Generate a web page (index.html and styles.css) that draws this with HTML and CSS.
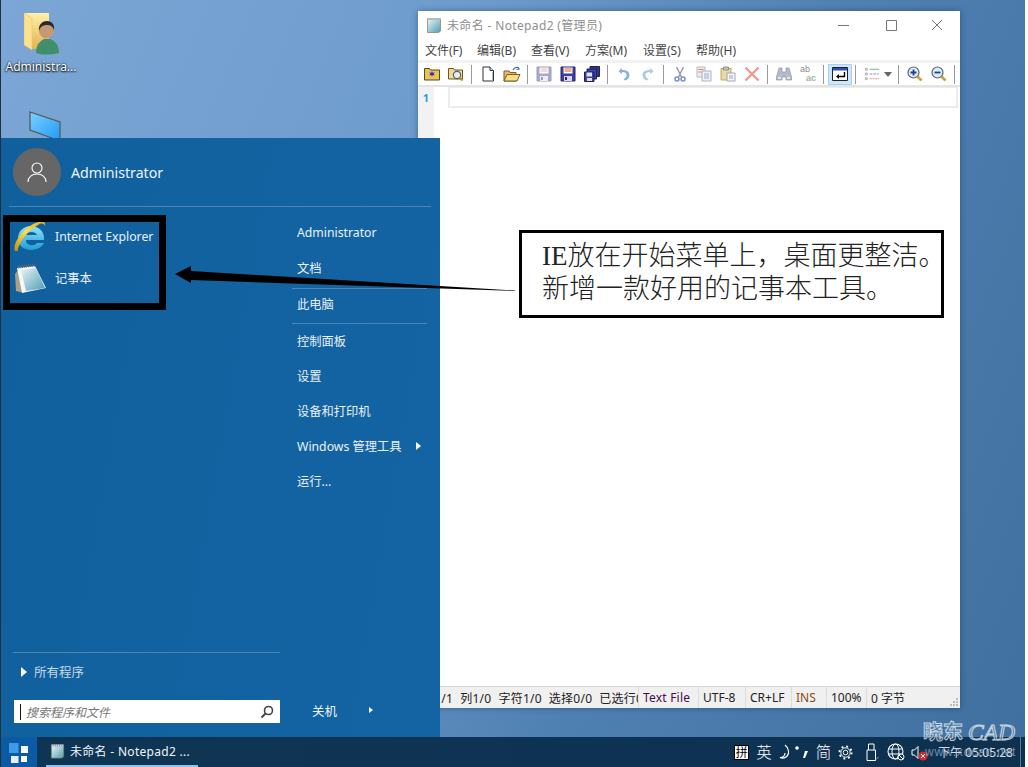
FILE: index.html
```html
<!DOCTYPE html>
<html lang="zh">
<head>
<meta charset="utf-8">
<title>Desktop</title>
<link rel="stylesheet" href="styles.css">
</head>
<body>
<svg class="defs" width="0" height="0" aria-hidden="true">
  <defs>
    <linearGradient id="pad" x1="0" y1="0" x2="1" y2="1"><stop offset="0" stop-color="#e8f4f6"/><stop offset="1" stop-color="#4f9db4"/></linearGradient>
    <linearGradient id="fold" x1="0" y1="0" x2="0" y2="1"><stop offset="0" stop-color="#fff0a8"/><stop offset="1" stop-color="#e3b34f"/></linearGradient>
    <linearGradient id="screen" x1="0" y1="0" x2="1" y2="1"><stop offset="0" stop-color="#7cd0ff"/><stop offset="1" stop-color="#1d9bf5"/></linearGradient>
    <linearGradient id="ie" x1="0" y1="0" x2="0" y2="1"><stop offset="0" stop-color="#8fe4fa"/><stop offset="1" stop-color="#1f9cd8"/></linearGradient>
    <linearGradient id="ring" x1="0" y1="1" x2="1" y2="0"><stop offset="0" stop-color="#c98a10"/><stop offset=".5" stop-color="#ffe04a"/><stop offset="1" stop-color="#e8a820"/></linearGradient>
    <symbol id="i-pad" viewBox="0 0 16 16">
      <path d="M1.500 2.500h13v11.500l-2 1.500h-11z" fill="url(#pad)" stroke="#8a8a6a" stroke-width=".8"/>
      <path d="M1.500 1h13v2h-13z" fill="#dfe8ea"/>
      <path d="M2 1v2M4 1v2M6 1v2M8 1v2M10 1v2M12 1v2M14 1v2" stroke="#667" stroke-width=".7"/>
    </symbol>
    <symbol id="i-folder-star" viewBox="0 0 16 16">
      <path d="M.5 2.500h5l1 1.500h9v10h-15z" fill="#e8c25a" stroke="#5a4a16"/>
      <path d="M8 5l.7 1.900L10.800 6l-1.200 1.800 1.200 1.800-2.100-.8L8 11l-.7-2.200-2.100.8 1.200-1.800L5.200 6l2.100.9z" fill="#2222c0"/>
    </symbol>
    <symbol id="i-folder-find" viewBox="0 0 16 16">
      <path d="M.5 2.500h5l1 1.500h8v9h-14z" fill="#f3d898" stroke="#6b5a1e"/>
      <circle cx="9" cy="9" r="3.600" fill="#dfeefa" stroke="#55606e" stroke-width="1.200"/>
      <path d="M11.500 11.500l3 3" stroke="#c98a10" stroke-width="2"/>
    </symbol>
    <symbol id="i-doc" viewBox="0 0 16 16">
      <path d="M3 1h7l3.500 3.500V15H3z" fill="#fff" stroke="#333"/>
      <path d="M10 1v3.500h3.500" fill="#dde6f0" stroke="#333"/>
      <path d="M12.500 6v8.500" stroke="#a8c0d8"/>
    </symbol>
    <symbol id="i-open" viewBox="0 0 18 16">
      <path d="M1 5h5l1 1.500h6V15H1z" fill="#e2bb62" stroke="#7a5f20"/>
      <path d="M4 8.500h13L14 15H1z" fill="#f7dc8e" stroke="#7a5f20"/>
      <path d="M10 4c1-2 3-3 5-2.500M15 1l1 2-2.500.5" fill="none" stroke="#3a72b4" stroke-width="1.200"/>
    </symbol>
    <symbol id="i-save" viewBox="0 0 16 16">
      <path d="M1 1h14v14H1z" fill="#3d3f9c" stroke="#26276e"/>
      <path d="M3.500 1.500h9v6h-9z" fill="#fff"/>
      <path d="M4.500 3h7M4.500 5h7" stroke="#e0602a"/>
      <path d="M4 10h8v5H4z" fill="#d8d8e4"/>
      <path d="M5 11h2v3H5z" fill="#26276e"/>
    </symbol>
    <symbol id="i-saveall" viewBox="0 0 16 16">
      <path d="M6 .5h9.500v10H6z" fill="#34358a" stroke="#1d1e5c"/>
      <path d="M3 3h9.500v10H3z" fill="#4042a4" stroke="#1d1e5c"/>
      <path d="M.5 6h9.500v9.500H.5z" fill="#3d3f9c" stroke="#1d1e5c"/>
      <path d="M2.500 6.500h5.500v4H2.500z" fill="#dbe7f8"/>
      <path d="M3 12h5v3H3z" fill="#dfdfe8"/>
    </symbol>
    <symbol id="i-undo" viewBox="0 0 12 14">
      <path d="M3.500 1L.5 4.500l3.500 2.500V5c3 0 4.500 1 4.500 3s-1.500 3.500-3 4l1.500 1.500c3-.8 4.500-3 4.500-5.500C11.500 5 9 3 4 3z" fill="#8fb0dc"/>
    </symbol>
    <symbol id="i-cut" viewBox="0 0 12 16">
      <path d="M2.500 1L7.500 11M9.500 1L4.500 11" stroke="#9a9ca6" stroke-width="1.500"/>
      <circle cx="3" cy="13" r="2" fill="none" stroke="#7d8fc4" stroke-width="1.500"/>
      <circle cx="9" cy="13" r="2" fill="none" stroke="#7d8fc4" stroke-width="1.500"/>
    </symbol>
    <symbol id="i-copy" viewBox="0 0 16 16">
      <path d="M1 1h8v10H1z" fill="#f4ecea" stroke="#b8b8c4"/>
      <path d="M2.500 3.500h5M2.500 6h5" stroke="#d88a80"/>
      <path d="M6 5h9v10H6z" fill="#eef2f8" stroke="#a8b4c8"/>
      <path d="M8 8h5M8 10h5M8 12h5" stroke="#9cb0cc"/>
    </symbol>
    <symbol id="i-paste" viewBox="0 0 16 16">
      <path d="M1 2.500h10V14H1z" fill="#ecd9a0" stroke="#b8a876"/>
      <path d="M3.500 1h5v3h-5z" fill="#c4c4c4" stroke="#909090"/>
      <path d="M7 7h8v8H7z" fill="#f4f6fa" stroke="#a0a8b8"/>
      <path d="M9 10h4M9 12h4" stroke="#a0a8b8"/>
    </symbol>
    <symbol id="i-del" viewBox="0 0 16 16">
      <path d="M1.500 1.500l13 13M14.500 1.500l-13 13" stroke="#ec9c8c" stroke-width="2.400"/>
    </symbol>
    <symbol id="i-find" viewBox="0 0 16 16">
      <path d="M3 2h3v4h4V2h3l2.500 9v3H10v-3H6v3H.5v-3z" fill="#b4bccc" stroke="#8e96a8" stroke-width=".7"/>
      <path d="M2 11h3v2H2zM11 11h3v2h-3z" fill="#e4e8f0"/>
    </symbol>
    <symbol id="i-wrap" viewBox="0 0 16 14">
      <path d="M.5.500h15v13H.5z" fill="#fff" stroke="#222"/>
      <path d="M1 1h14v2.500H1z" fill="#2a52b0"/>
      <path d="M12.500 5v4.500H6" fill="none" stroke="#000" stroke-width="1.400"/>
      <path d="M7 7L4 9.500 7 12z" fill="#000"/>
    </symbol>
    <symbol id="i-zin" viewBox="0 0 16 16">
      <circle cx="6.500" cy="6.500" r="5.500" fill="#dcecfa" stroke="#5a6270" stroke-width="1.200"/>
      <path d="M3.500 6.500h6M6.500 3.500v6" stroke="#24408c" stroke-width="1.800"/>
      <path d="M10.500 10.500l4 4" stroke="#d0a030" stroke-width="2.600"/>
    </symbol>
    <symbol id="i-zout" viewBox="0 0 16 16">
      <circle cx="6.500" cy="6.500" r="5.500" fill="#dcecfa" stroke="#5a6270" stroke-width="1.200"/>
      <path d="M3.500 6.500h6" stroke="#24408c" stroke-width="1.800"/>
      <path d="M10.500 10.500l4 4" stroke="#d0a030" stroke-width="2.600"/>
    </symbol>
  </defs>
</svg>

<div class="desktop">
  <main class="wall">
    <div class="desk-icon user-folder">
      <svg class="desk-glyph" viewBox="0 0 36 44" aria-hidden="true">
        <path d="M0 2h25v36H8z" fill="url(#fold)"/>
        <path d="M0 2l8 5v32l-8-5z" fill="#fbe08e" stroke="#e0c070" stroke-width=".5"/>
        <path d="M12 42c0-8 4-12 8-14h6c5 2 9 6 9 14-8 2-16 2-23 0z" fill="#3f8f6a"/>
        <circle cx="22.500" cy="20" r="7.500" fill="#c49a74"/>
        <path d="M15 20c-1-7 4-10 8-10s8 3 7 9c-1-3-3-5-7-5s-7 2-8 6z" fill="#2a2a2a"/>
      </svg>
      <span class="desk-label">Administra...</span>
    </div>
    <svg class="monitor" viewBox="0 0 32 32" aria-hidden="true">
      <path d="M1 1l30 10v19L1 19z" fill="url(#screen)" stroke="#555" stroke-width="1.200"/>
    </svg>

    <section class="notepad">
      <header class="np-title">
        <svg class="np-logo" aria-hidden="true"><use href="#i-pad"/></svg>
        <span class="np-caption">未命名 - Notepad2 (管理员)</span>
        <div class="np-controls">
          <svg viewBox="0 0 46 16" aria-hidden="true"><path d="M16 8.500h11" stroke="#777"/></svg>
          <svg viewBox="0 0 46 16" aria-hidden="true"><path d="M18.500 3.500h10v10h-10z" fill="none" stroke="#777"/></svg>
          <svg viewBox="0 0 46 16" aria-hidden="true"><path d="M18 3l10 10M28 3L18 13" stroke="#777"/></svg>
        </div>
      </header>
      <nav class="np-menu">
        <span class="m1">文件(F)</span><span class="m2">编辑(B)</span><span class="m3">查看(V)</span><span class="m4">方案(M)</span><span class="m5">设置(S)</span><span>帮助(H)</span>
      </nav>
      <div class="np-tools">
        <span class="tb"><svg class="ic"><use href="#i-folder-star"/></svg></span>
        <span class="tb"><svg class="ic"><use href="#i-folder-find"/></svg></span>
        <i class="sep"></i>
        <span class="tb"><svg class="ic"><use href="#i-doc"/></svg></span>
        <span class="tb"><svg class="ic wide"><use href="#i-open"/></svg></span>
        <i class="sep"></i>
        <span class="tb"><svg class="ic faint"><use href="#i-save"/></svg></span>
        <span class="tb"><svg class="ic"><use href="#i-save"/></svg></span>
        <span class="tb"><svg class="ic"><use href="#i-saveall"/></svg></span>
        <i class="sep"></i>
        <span class="tb"><svg class="ic narrow"><use href="#i-undo"/></svg></span>
        <span class="tb"><svg class="ic narrow flip faint2"><use href="#i-undo"/></svg></span>
        <i class="sep"></i>
        <span class="tb"><svg class="ic narrow"><use href="#i-cut"/></svg></span>
        <span class="tb"><svg class="ic"><use href="#i-copy"/></svg></span>
        <span class="tb"><svg class="ic"><use href="#i-paste"/></svg></span>
        <span class="tb"><svg class="ic"><use href="#i-del"/></svg></span>
        <i class="sep"></i>
        <span class="tb"><svg class="ic"><use href="#i-find"/></svg></span>
        <span class="tb"><span class="ab"><span>ab</span><b>ac</b></span></span>
        <i class="sep"></i>
        <span class="tb active"><svg class="ic"><use href="#i-wrap"/></svg></span>
        <i class="sep"></i>
        <span class="tb list">
          <svg class="ic" viewBox="0 0 17 14" aria-hidden="true">
            <path d="M1.500 1h2v2h-2zM1.500 6h2v2h-2zM1.500 11h2v2h-2z" fill="#fff" stroke="#999" stroke-width=".8"/>
            <path d="M6 2h10" stroke="#70b070"/><path d="M6 7h10" stroke="#8888cc" stroke-dasharray="3 1"/><path d="M6 12h10" stroke="#cc8888" stroke-dasharray="2 1"/>
          </svg>
          <i class="caret"></i>
        </span>
        <i class="sep"></i>
        <span class="tb"><svg class="ic"><use href="#i-zin"/></svg></span>
        <span class="tb"><svg class="ic"><use href="#i-zout"/></svg></span>
        <i class="sep"></i>
      </div>
      <div class="np-edit">
        <div class="gutter">1</div>
        <div class="np-text"><div class="curline"></div></div>
      </div>
      <footer class="np-status">
        <span class="f f-pos"><span>行1/1</span><span>列1/0</span><span>字符1/0</span><span>选择0/0</span><span>已选行0</span></span>
        <span class="f f-type">Text File</span>
        <span class="f f-enc">UTF-8</span>
        <span class="f f-eol">CR+LF</span>
        <span class="f f-ins">INS</span>
        <span class="f f-zoom">100%</span>
        <span class="f f-size">0 字节</span>
        <svg class="grip" viewBox="0 0 10 10" aria-hidden="true"><path d="M7 1h2v2H7zM4 4h2v2H4zM7 4h2v2H7zM1 7h2v2H1zM4 7h2v2H4zM7 7h2v2H7z" fill="#bdbdbd"/></svg>
      </footer>
    </section>

    <section class="start">
      <div class="st-user">
        <span class="avatar">
          <svg viewBox="0 0 24 24" aria-hidden="true"><circle cx="12" cy="8" r="5" fill="none" stroke="#fff" stroke-width="1.100"/><path d="M3 22c0-5 4-8 9-8s9 3 9 8" fill="none" stroke="#fff" stroke-width="1.100"/></svg>
        </span>
        <span class="st-name">Administrator</span>
      </div>
      <div class="st-body">
        <div class="st-left">
          <div class="pinned">
            <div class="pin">
              <svg class="pin-ic" viewBox="0 0 32 32" aria-hidden="true">
                <path d="M4 18A13 12 0 0 1 30 18v2H12a6 5 0 0 0 11 3h7c-3 5-8 7-13 7C9 30 4 25 4 18zm8-3h11a6 5 0 0 0-11 0z" fill="url(#ie)" fill-rule="evenodd"/>
                <path d="M1 31C-2 24 9 7 24 2c5-2 8 0 7 4-1-3-4-3-7-1C13 11 5 22 3.500 31z" fill="url(#ring)"/>
              </svg>
              <span>Internet Explorer</span>
            </div>
            <div class="pin">
              <svg class="pin-ic" viewBox="0 0 32 32" aria-hidden="true">
                <path d="M1 12l3-4 6 23-8-2z" fill="#a8a088"/>
                <path d="M3 6l18-2 11 22-24 5z" fill="#f4f8f8"/>
                <path d="M7 8l15-2 9 20-19 3z" fill="url(#pad)"/>
                <path d="M4 5l17-2" stroke="#666" stroke-width="3" stroke-dasharray="1 1"/>
              </svg>
              <span>记事本</span>
            </div>
          </div>
          <div class="st-spacer"></div>
          <div class="allprog"><i class="tri"></i><span>所有程序</span></div>
          <div class="search">
            <i class="text-caret"></i><span class="ph">搜索程序和文件</span>
            <svg viewBox="0 0 14 14" aria-hidden="true"><circle cx="8.500" cy="5.500" r="4" fill="none" stroke="#444" stroke-width="1.600"/><path d="M5.500 8.500L1.500 12.500" stroke="#444" stroke-width="2"/></svg>
          </div>
        </div>
        <div class="st-right">
          <div class="links">
            <a class="link">Administrator</a>
            <a class="link ruled rule-a">文档</a>
            <a class="link ruled rule-b">此电脑</a>
            <a class="link after-rule">控制面板</a>
            <a class="link">设置</a>
            <a class="link">设备和打印机</a>
            <a class="link more">Windows 管理工具<i class="tri"></i></a>
            <a class="link">运行...</a>
          </div>
          <div class="power">关机<i class="tri small"></i></div>
        </div>
      </div>
    </section>

    <div class="highlight"></div>
    <svg class="arrow" viewBox="0 0 345 30" aria-hidden="true">
      <path d="M0 11L16 3v5L340 27.500l0 .5L16 17v3z" fill="#000"/>
    </svg>
    <div class="note">
      <p>IE放在开始菜单上，桌面更整洁。</p>
      <p>新增一款好用的记事本工具。</p>
    </div>
  </main>

  <footer class="taskbar">
    <span class="start-btn">
      <svg viewBox="0 0 19 20" aria-hidden="true"><path d="M0 0h9.500v10H0z" fill="#3f9be6"/><path d="M12 3h7v7h-7z" fill="#fff"/><path d="M2 13h7.500v7H2z" fill="#e8eef6"/><path d="M12 13h6v6h-6z" fill="#fff"/></svg>
    </span>
    <div class="task">
      <svg aria-hidden="true"><use href="#i-pad"/></svg>
      <span>未命名 - Notepad2 ...</span>
    </div>
    <div class="tray">
      <span class="ime">拼</span>
      <span class="t-big">英</span>
      <svg class="t-moon" viewBox="0 0 13 16" aria-hidden="true"><path d="M6 1c4 3 5 9 1 12-2 1.500-4 1.500-6 .5 3 0 5-2 5-4.500" fill="none" stroke="#fff" stroke-width="1.200"/></svg>
      <svg class="t-punct" viewBox="0 0 14 14" aria-hidden="true"><circle cx="2" cy="3" r="1.800" fill="#fff"/><path d="M10 6h3l-3 7H8z" fill="#fff"/></svg>
      <span class="t-big">简</span>
      <svg class="t-gear" viewBox="0 0 16 16" aria-hidden="true"><circle cx="8" cy="8" r="2.500" fill="none" stroke="#fff"/><circle cx="8" cy="8" r="5" fill="none" stroke="#fff" stroke-width="1"/><circle cx="8" cy="8" r="6.500" fill="none" stroke="#fff" stroke-width="2" stroke-dasharray="2 3.100"/></svg>
      <svg class="t-usb" viewBox="0 0 14 19" aria-hidden="true"><path d="M1 7h8.500v10.500H1zM2.500 7V1h5.500v6" fill="none" stroke="#fff"/><path d="M9.500 17l3-3" stroke="#99a" /></svg>
      <svg class="t-globe" viewBox="0 0 18 18" aria-hidden="true"><circle cx="8.500" cy="8.500" r="7.500" fill="none" stroke="#fff" stroke-width="1.100"/><ellipse cx="8.500" cy="8.500" rx="3.500" ry="7.500" fill="none" stroke="#fff"/><path d="M1 6h15M1 11h15" stroke="#fff"/><circle cx="14" cy="14" r="3" fill="#0f3252" stroke="#fff"/><path d="M12 12l4 4" stroke="#fff"/></svg>
      <svg class="t-spk" viewBox="0 0 17 17" aria-hidden="true"><path d="M1 6h2.500L7 2.500v12L3.500 11H1z" fill="none" stroke="#fff"/><circle cx="12" cy="12" r="4.500" fill="#d42a2a"/><path d="M10 10l4 4M14 10l-4 4" stroke="#fff"/></svg>
      <span class="clock">下午 05:05:28</span>
    </div>
    <span class="show-desk"></span>
  </footer>

  <div class="mark">
    <span class="mark-cn">晓东</span><span class="mark-en">CAD</span>
  </div>
  <span class="mark-url">www.xdcad.net</span>
</div>
</body>
</html>
```

FILE: styles.css
```css
* { box-sizing: border-box; }
html, body { margin: 0; padding: 0; }
body {
  width: 1028px;
  height: 767px;
  overflow: hidden;
  background: #fff;
  font-family: "Noto Sans", "Noto Sans CJK SC", sans-serif;
}
.defs { position: absolute; }
.desktop {
  position: relative;
  width: 1025px;
  height: 767px;
  display: flex;
  flex-direction: column;
  border-left: 1px solid #20303c;
}
.wall {
  position: relative;
  flex: 1;
  background: linear-gradient(112deg, #7ba6d6 0%, #6e9ccd 35%, #4f80b2 65%, #40709f 100%);
}

/* desktop icons */
.desk-icon { position: absolute; left: 0; top: 8px; width: 80px; text-align: center; }
.desk-glyph { display: block; width: 36px; height: 44px; margin: 3px 0 4px 23px; }
.desk-label {
  display: block;
  color: #fff;
  font-size: 12px;
  line-height: 16px;
  white-space: nowrap;
  text-shadow: 0 1px 2px #000, 0 0 2px #000;
}
.monitor { position: absolute; left: 28px; top: 111px; width: 32px; height: 32px; }

/* notepad */
.notepad {
  position: absolute;
  left: 417px;
  top: 11px;
  width: 542px;
  height: 697px;
  background: #fff;
  display: flex;
  flex-direction: column;
  box-shadow: 0 0 6px rgba(20, 40, 70, .45);
}
.np-title { height: 29px; display: flex; align-items: center; padding: 0 0 2px 8px; flex: none; }
.np-logo { width: 16px; height: 16px; margin-right: 5px; }
.np-caption { font-size: 12px; color: #8f8f8f; letter-spacing: .35px; white-space: nowrap; }
.np-controls { margin-left: auto; display: flex; }
.np-controls svg { width: 46px; height: 16px; display: block; }
.np-menu {
  height: 20px;
  flex: none;
  display: flex;
  align-items: center;
  padding-left: 7px;
  font-size: 12px;
  color: #444;
}
.np-menu span { white-space: nowrap; }
.m1 { width: 52px; }
.m2, .m3 { width: 54px; }
.m4 { width: 58px; }
.m5 { width: 53px; }
.np-tools {
  height: 27px;
  flex: none;
  display: flex;
  align-items: center;
  padding-left: 2px;
  background: #fff;
  border-top: 3px solid #f2f2f2;
  border-bottom: 2px solid #e4e4e4;
}
.tb { width: 24px; height: 21px; display: flex; align-items: center; justify-content: center; flex: none; }
.tb.active { background: #cde6fb; border: 1px solid #a6d2f5; }
.tb.list { width: 35px; gap: 4px; }
.ic { width: 16px; height: 16px; display: block; }
.ic.wide { width: 18px; }
.ic.narrow { width: 12px; }
.ic.flip { transform: scaleX(-1); }
.faint { opacity: .45; }
.faint2 { opacity: .7; }
.sep { width: 8px; height: 19px; flex: none; position: relative; display: block; }
.sep::before { content: ""; position: absolute; left: 3px; top: 0; bottom: 0; width: 1px; background: #9a9a9a; }
.caret { display: block; width: 0; height: 0; border: 4px solid transparent; border-top: 5px solid #666; border-bottom: 0; }
.ab { display: flex; flex-direction: column; font: 9px/9px "Liberation Sans", sans-serif; color: #8f8f8f; text-align: left; }
.ab b { color: #9aba9a; margin-left: 6px; }
.np-edit { flex: 1; display: flex; min-height: 0; }
.gutter {
  width: 16px;
  background: #f2f2f2;
  color: #2f9fd0;
  font: bold 11px/22px "Noto Sans", sans-serif;
  text-align: center;
  flex: none;
}
.np-text { flex: 1; padding: 0 2px 0 14px; }
.curline { height: 21px; border: 2px solid #ececec; border-top: 1px solid #ececec; }
.np-status {
  height: 22px;
  flex: none;
  background: #f0f0f0;
  border-top: 1px solid #d8d8d8;
  display: flex;
  align-items: center;
  position: relative;
  font-size: 12px;
  color: #222;
}
.f { height: 100%; display: flex; align-items: center; padding-left: 4px; border-right: 1px solid #dcdcdc; white-space: nowrap; overflow: hidden; flex: none; }
.f-pos { width: 221px; padding-left: 4px; gap: 7px; letter-spacing: .25px; }
.f-type { width: 60px; color: #4a0a4a; letter-spacing: .2px; }
.f-enc { width: 47px; color: #222; }
.f-eol { width: 46px; }
.f-ins { width: 35px; color: #8a4a10; }
.f-zoom { width: 40px; }
.f-size { border-right: 0; }
.grip { position: absolute; right: 1px; bottom: 1px; width: 10px; height: 10px; }

/* start menu */
.start {
  position: absolute;
  left: 0;
  top: 138px;
  width: 439px;
  height: 599px;
  background: linear-gradient(100deg, #11609e, #1464a3);
  color: #fff;
  display: flex;
  flex-direction: column;
}
.st-user {
  height: 69px;
  margin: 0 9px 0 8px;
  flex: none;
  display: flex;
  align-items: center;
  padding: 10px 0 10px 4px;
  border-bottom: 1px solid #4a85b6;
}
.avatar { width: 48px; height: 48px; border-radius: 50%; background: #666; display: flex; align-items: center; justify-content: center; }
.avatar svg { width: 24px; height: 24px; display: block; }
.st-name { margin-left: 10px; font-size: 14.200px; color: #eef4fa; }
.st-body { flex: 1; display: flex; min-height: 0; }
.st-left { width: 279px; display: flex; flex-direction: column; flex: none; }
.pinned { padding: 8px 0 0 13px; }
.pin { height: 42px; display: flex; align-items: center; font-size: 12.250px; color: #eaf1f8; gap: 9px; }
.pin-ic { width: 32px; height: 32px; display: block; flex: none; }
.st-spacer { flex: 1; }
.allprog {
  height: 48px;
  margin-left: 12px;
  flex: none;
  border-top: 1px solid #4a85b6;
  display: flex;
  align-items: center;
  padding: 0 0 10px 8px;
  font-size: 12.500px;
  color: #c9d9e8;
  gap: 7px;
}
.tri { display: block; width: 0; height: 0; border: 5px solid transparent; border-left: 6px solid #fff; border-right: 0; }
.tri.small { border-width: 3.500px; border-left-width: 4px; border-right-width: 0; }
.search {
  height: 23px;
  margin: 0 0 14px 13px;
  flex: none;
  background: #fff;
  display: flex;
  align-items: center;
  padding: 0 6px 0 6px;
}
.text-caret { width: 1px; height: 16px; background: #111; flex: none; }
.ph { margin-left: 5px; font-size: 12px; font-style: italic; color: #777; }
.search svg { width: 14px; height: 14px; margin-left: auto; display: block; }
.st-right { flex: 1; display: flex; flex-direction: column; }
.links { padding: 8px 13px 0 12px; flex: 1; }
.link {
  display: flex;
  align-items: center;
  height: 35px;
  padding-left: 5px;
  font-size: 12.250px;
  color: #eaf1f8;
  white-space: nowrap;
}
.link.ruled { position: relative; }
.link.rule-a { height: 39px; padding-bottom: 3px; }
.link.rule-b { height: 35px; padding-bottom: 5px; }
.link.after-rule { margin-top: -1px; }
.link.ruled::after { content: ""; position: absolute; left: 0; right: 0; bottom: 0; height: 1px; background: #4a85b6; }
.link .tri { margin-left: 14px; border-width: 4.500px; border-left-width: 5px; border-right-width: 0; }
.power { height: 52px; flex: none; display: flex; align-items: center; padding: 0 0 2px 32px; gap: 32px; font-size: 12.500px; color: #eef4fa; }

/* overlays */
.highlight { position: absolute; left: 2px; top: 215px; width: 163px; height: 95px; border: 7px solid #000; }
.arrow { position: absolute; left: 174px; top: 263px; width: 345px; height: 30px; }
.note {
  position: absolute;
  left: 518px;
  top: 230px;
  width: 425px;
  height: 88px;
  background: #fff;
  border: 3px solid #000;
  padding: 7px 0 0 20px;
  font-size: 27px;
  line-height: 33px;
  color: #222;
  font-family: "Liberation Serif", "Noto Sans CJK SC", serif;
  font-weight: 300;
  white-space: nowrap;
}
.note p { margin: 0; }

/* taskbar */
.taskbar {
  height: 30px;
  flex: none;
  display: flex;
  align-items: stretch;
  background: linear-gradient(90deg, #0f3555, #0e3150);
  color: #fff;
}
.start-btn { width: 36px; background: #0a5ba4; display: flex; align-items: center; padding: 1px 0 0 8px; flex: none; }
.start-btn svg { width: 19px; height: 20px; display: block; }
.task {
  width: 152px;
  margin-left: 9px;
  flex: none;
  display: flex;
  align-items: center;
  gap: 5px;
  padding: 0 0 0 4px;
  font-size: 12px;
  letter-spacing: .3px;
  color: #f0f4f8;
  white-space: nowrap;
  border-bottom: 2px solid #8fc3ea;
}
.task svg { width: 15px; height: 16px; display: block; flex: none; }
.tray { margin-left: auto; display: flex; align-items: center; padding-right: 7px; }
.ime { width: 15px; height: 15px; background: #fff; color: #000; border: 1px solid #000; font-size: 12px; line-height: 13px; text-align: center; display: block; overflow: hidden; }
.t-big { font-size: 15.500px; line-height: 20px; color: #fff; margin-left: 7px; font-weight: 300; }
.t-moon { width: 13px; height: 16px; margin-left: 7px; }
.t-punct { width: 14px; height: 14px; margin-left: 3px; }
.t-gear { width: 15px; height: 15px; margin-left: 7px; }
.t-usb { width: 14px; height: 19px; margin-left: 13px; }
.t-globe { width: 18px; height: 18px; margin-left: 7px; }
.t-spk { width: 17px; height: 17px; margin-left: 6px; }
.clock { margin-left: 10px; font-size: 12px; color: #cfd9e2; white-space: nowrap; }
.show-desk { width: 5px; flex: none; border-left: 1px solid #5f7c96; }

/* watermark */
.mark { position: absolute; left: 922px; top: 719px; display: flex; align-items: center; gap: 5px; height: 26px; opacity: .8; }
.mark-cn { font-size: 20px; line-height: 24px; font-weight: 700; color: transparent; -webkit-text-stroke: 1px #e8eef4; }
.mark-en { font-family: "Liberation Serif", serif; font-style: italic; font-size: 23.500px; line-height: 24px; color: rgba(255, 255, 255, .2); -webkit-text-stroke: 1px #e8eef4; }
.mark-url { position: absolute; left: 924px; top: 744px; font: 12px/16px "Liberation Sans", sans-serif; color: rgba(210, 220, 230, .55); letter-spacing: .8px; white-space: nowrap; }
```
